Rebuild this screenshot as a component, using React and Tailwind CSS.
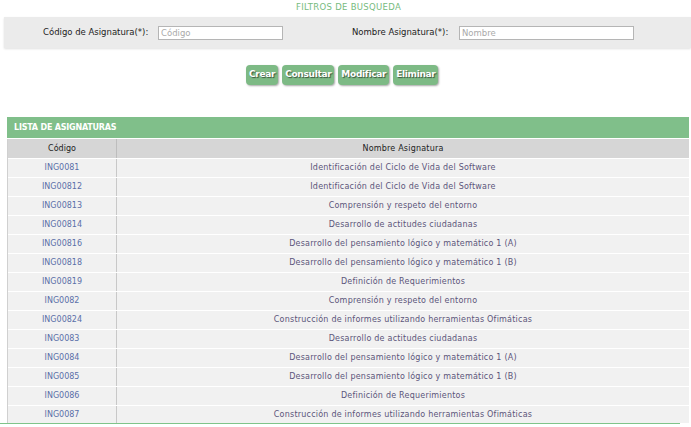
import React from "react";

const rows = [
  ["ING0081", "Identificación del Ciclo de Vida del Software"],
  ["ING00812", "Identificación del Ciclo de Vida del Software"],
  ["ING00813", "Comprensión y respeto del entorno"],
  ["ING00814", "Desarrollo de actitudes ciudadanas"],
  ["ING00816", "Desarrollo del pensamiento lógico y matemático 1 (A)"],
  ["ING00818", "Desarrollo del pensamiento lógico y matemático 1 (B)"],
  ["ING00819", "Definición de Requerimientos"],
  ["ING0082", "Comprensión y respeto del entorno"],
  ["ING00824", "Construcción de informes utilizando herramientas Ofimáticas"],
  ["ING0083", "Desarrollo de actitudes ciudadanas"],
  ["ING0084", "Desarrollo del pensamiento lógico y matemático 1 (A)"],
  ["ING0085", "Desarrollo del pensamiento lógico y matemático 1 (B)"],
  ["ING0086", "Definición de Requerimientos"],
  ["ING0087", "Construcción de informes utilizando herramientas Ofimáticas"],
];

const buttons = ["Crear", "Consultar", "Modificar", "Eliminar"];

export default function App() {
  return (
    <div className="w-[691px] h-[427px] overflow-hidden bg-white font-['DejaVu_Sans',Verdana,sans-serif]">
      {/* filtros */}
      <div className="h-[17px] pt-[1px] pl-[6px] text-center text-[8.5px] leading-[12px] tracking-[0.3px] text-[#77bb80]">
        FILTROS DE BUSQUEDA
      </div>
      <div className="ml-[4px] h-[31px] bg-[#ebebeb] shadow-[0_1px_2px_rgba(0,0,0,0.12)] flex items-center text-[8.5px] text-[#222]">
        <span className="ml-[39px] w-[115px]">Código de Asignatura(*):</span>
        <input
          placeholder="Código"
          className="w-[125px] h-[14px] bg-white border border-[#b5b5b5] px-[2px] text-[8.5px] placeholder:text-[#aaa] outline-none"
        />
        <span className="ml-[69px] w-[107px]">Nombre Asignatura(*):</span>
        <input
          placeholder="Nombre"
          className="w-[175px] h-[14px] bg-white border border-[#b5b5b5] px-[2px] text-[8.5px] placeholder:text-[#aaa] outline-none"
        />
      </div>

      {/* acciones */}
      <div className="mt-[17px] flex pl-[246px] gap-[4px]">
        {buttons.map((b) => (
          <button
            key={b}
            className="h-[20px] px-[3px] rounded-[4px] bg-[#7dba85] text-white text-[9px] font-bold tracking-[-0.3px] [text-shadow:1px_1px_1px_rgba(0,0,0,0.55)] shadow-[1px_1px_2px_rgba(0,0,0,0.35)]"
          >
            {b}
          </button>
        ))}
      </div>

      {/* lista */}
      <div className="mt-[32px] h-[306px] overflow-hidden ml-[7px] w-[682px]">
        <div className="h-[21px] bg-[#80bf8a] flex items-center pl-[7px] text-[8px] font-bold text-white tracking-[-0.2px]">
          LISTA DE ASIGNATURAS
        </div>
        <div className="mt-[1px] border-l border-[#d0d0d0] text-[8px]">
          <div className="flex h-[19px] bg-[#d6d6d6] text-[#222] items-center">
            <div className="w-[109px] text-center border-r border-[#bdbdbd] h-full flex items-center justify-center">
              Código
            </div>
            <div className="flex-1 text-center tracking-[0.2px]">Nombre Asignatura</div>
          </div>
          {rows.map(([c, n], i) => (
            <div key={i} className="flex h-[19px] bg-[#f1f1f1] border-t border-white items-center">
              <div className="w-[109px] h-full border-r border-[#c8c8c8] flex items-center justify-center text-[#5b6fa8]">
                {c}
              </div>
              <div className="flex-1 text-center tracking-[0.22px] text-[#5b557a]">{n}</div>
            </div>
          ))}
        </div>
      </div>
      <div className="h-[1px] w-[680px] bg-[#7fc48a]" />
    </div>
  );
}
